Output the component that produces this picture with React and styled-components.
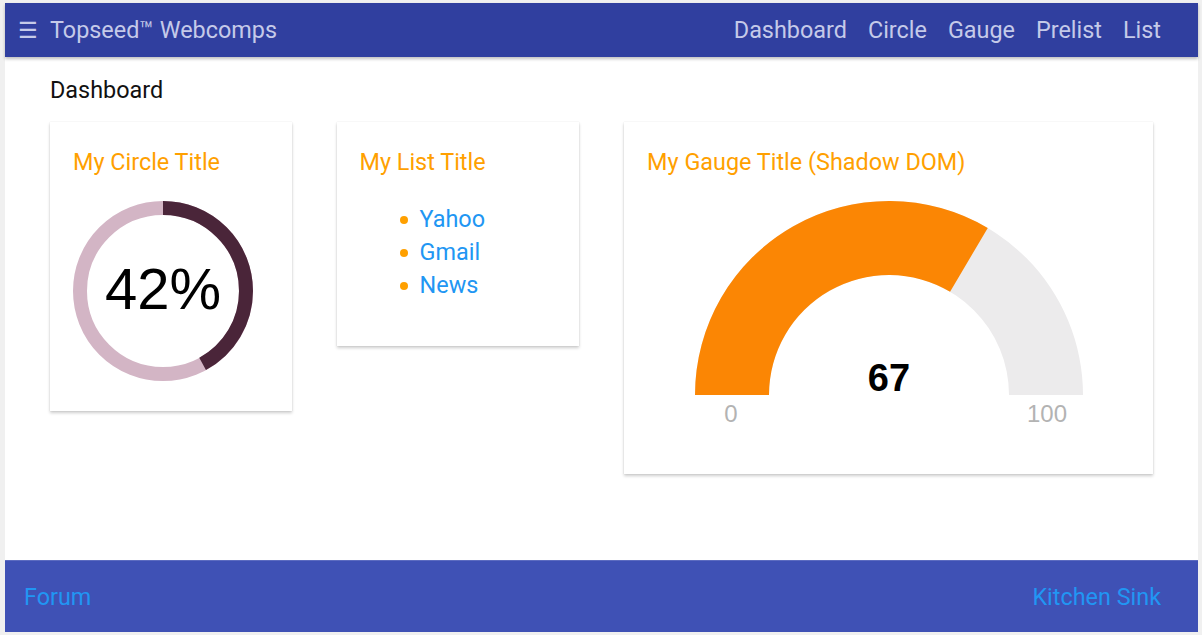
import styled, { createGlobalStyle } from "styled-components";

const GlobalStyle = createGlobalStyle`
  html, body {
    margin: 0;
    padding: 0;
    background: #f0f0f0;
  }
  body {
    font-family: Roboto, "Noto Sans", sans-serif;
  }
`;

const Frame = styled.div`
  padding: 3px 4px 3px 5px;
  height: 635px;
  box-sizing: border-box;
`;

const Shell = styled.div`
  display: flex;
  flex-direction: column;
  height: 100%;
  background: #fff;
`;

const TopBar = styled.header`
  position: relative;
  z-index: 1;
  display: flex;
  align-items: center;
  justify-content: space-between;
  height: 54px;
  padding: 0 37px 0 13px;
  background: #303f9f;
  color: #c5cae9;
  font-size: 23.4px;
  box-shadow: 0 2px 3px rgba(0, 0, 0, 0.25);
`;

const Brand = styled.div`
  display: flex;
  align-items: center;
  gap: 12px;
`;

const Burger = styled.span`
  font-size: 22px;
`;

const Nav = styled.nav`
  display: flex;
  gap: 21px;
`;

const NavLink = styled.a`
  color: #c5cae9;
  text-decoration: none;
`;

const Main = styled.main`
  flex: 1;
  padding: 19px 45px 0;
`;

const PageTitle = styled.div`
  font-size: 23.4px;
  color: #111;
  margin-bottom: 18px;
`;

const Cards = styled.div`
  display: flex;
  align-items: flex-start;
  gap: 45px;
`;

const Card = styled.section`
  width: ${(p) => p.$w}px;
  height: ${(p) => p.$h}px;
  box-sizing: border-box;
  padding: 26px 23px 0;
  background: #fff;
  box-shadow: 0 2px 3px rgba(0, 0, 0, 0.2), 0 0 1px rgba(0, 0, 0, 0.12);
`;

const CardTitle = styled.h2`
  margin: 0;
  font-size: 23.4px;
  font-weight: 400;
  color: #ffa000;
`;

const CircleWrap = styled.div`
  margin-top: 25px;
`;

const Bullets = styled.ul`
  margin: 27px 0 0;
  padding-left: 60px;
  list-style: none;
`;

const Bullet = styled.li`
  position: relative;
  font-size: 23.4px;
  line-height: 33px;
  color: #2196f3;

  &::before {
    content: "";
    position: absolute;
    left: -20px;
    top: 13px;
    width: 8px;
    height: 8px;
    border-radius: 50%;
    background: #ffa000;
  }
`;

const GaugeWrap = styled.div`
  display: flex;
  justify-content: center;
  margin-top: 19px;
`;

const Footer = styled.footer`
  display: flex;
  align-items: center;
  justify-content: space-between;
  height: 72px;
  padding: 0 37px 0 19px;
  background: #3f51b5;
  border-top: 1px solid #5c6bc0;
  box-sizing: border-box;
`;

const FooterLink = styled.a`
  color: #2196f3;
  font-size: 23.4px;
  text-decoration: none;
`;

function Circle({ pct }) {
  const r = 83;
  const c = 2 * Math.PI * r;
  return (
    <svg width="180" height="180" viewBox="0 0 180 180">
      <circle cx="90" cy="90" r={r} fill="none" stroke="#d3b5c5" strokeWidth="14" />
      <circle
        cx="90"
        cy="90"
        r={r}
        fill="none"
        stroke="#4a2539"
        strokeWidth="14"
        strokeDasharray={`${(c * pct) / 100} ${c}`}
        transform="rotate(-90 90 90)"
      />
      <text
        x="90"
        y="108"
        textAnchor="middle"
        fontFamily="'Liberation Sans', Arial, sans-serif"
        fontSize="58"
        fill="#000"
      >
        {pct}%
      </text>
    </svg>
  );
}

function Gauge({ value, min, max }) {
  const cx = 200;
  const cy = 200;
  const R = 194;
  const r = 120;
  const a = Math.PI * (1 - (value - min) / (max - min));
  const ox = cx + R * Math.cos(a);
  const oy = cy - R * Math.sin(a);
  const ix = cx + r * Math.cos(a);
  const iy = cy - r * Math.sin(a);
  const band = `M ${cx - R} ${cy} A ${R} ${R} 0 0 1 ${cx + R} ${cy} L ${cx + r} ${cy} A ${r} ${r} 0 0 0 ${cx - r} ${cy} Z`;
  const fill = `M ${cx - R} ${cy} A ${R} ${R} 0 0 1 ${ox} ${oy} L ${ix} ${iy} A ${r} ${r} 0 0 0 ${cx - r} ${cy} Z`;
  return (
    <svg width="400" height="240" viewBox="0 0 400 240">
      <path d={band} fill="#ecebec" />
      <path d={fill} fill="#fb8604" />
      <text
        x={cx}
        y="196"
        textAnchor="middle"
        fontFamily="'Liberation Sans', Arial, sans-serif"
        fontWeight="700"
        fontSize="38"
        fill="#000"
      >
        {value}
      </text>
      <text x={cx - 158} y="227" textAnchor="middle" fontFamily="'Liberation Sans', Arial, sans-serif" fontSize="24" fill="#b3b3b3">
        {min}
      </text>
      <text x={cx + 158} y="227" textAnchor="middle" fontFamily="'Liberation Sans', Arial, sans-serif" fontSize="24" fill="#b3b3b3">
        {max}
      </text>
    </svg>
  );
}

const links = ["Dashboard", "Circle", "Gauge", "Prelist", "List"];
const items = ["Yahoo", "Gmail", "News"];

export default function App() {
  return (
    <>
      <GlobalStyle />
      <Frame>
        <Shell>
          <TopBar>
            <Brand>
              <Burger>☰</Burger>
              <span>Topseed™ Webcomps</span>
            </Brand>
            <Nav>
              {links.map((l) => (
                <NavLink key={l} href="#">{l}</NavLink>
              ))}
            </Nav>
          </TopBar>
          <Main>
            <PageTitle>Dashboard</PageTitle>
            <Cards>
              <Card $w={242} $h={289}>
                <CardTitle>My Circle Title</CardTitle>
                <CircleWrap>
                  <Circle pct={42} />
                </CircleWrap>
              </Card>
              <Card $w={243} $h={224}>
                <CardTitle>My List Title</CardTitle>
                <Bullets>
                  {items.map((i) => (
                    <Bullet key={i}>{i}</Bullet>
                  ))}
                </Bullets>
              </Card>
              <Card $w={530} $h={352}>
                <CardTitle>My Gauge Title (Shadow DOM)</CardTitle>
                <GaugeWrap>
                  <Gauge value={67} min={0} max={100} />
                </GaugeWrap>
              </Card>
            </Cards>
          </Main>
          <Footer>
            <FooterLink href="#">Forum</FooterLink>
            <FooterLink href="#">Kitchen Sink</FooterLink>
          </Footer>
        </Shell>
      </Frame>
    </>
  );
}
